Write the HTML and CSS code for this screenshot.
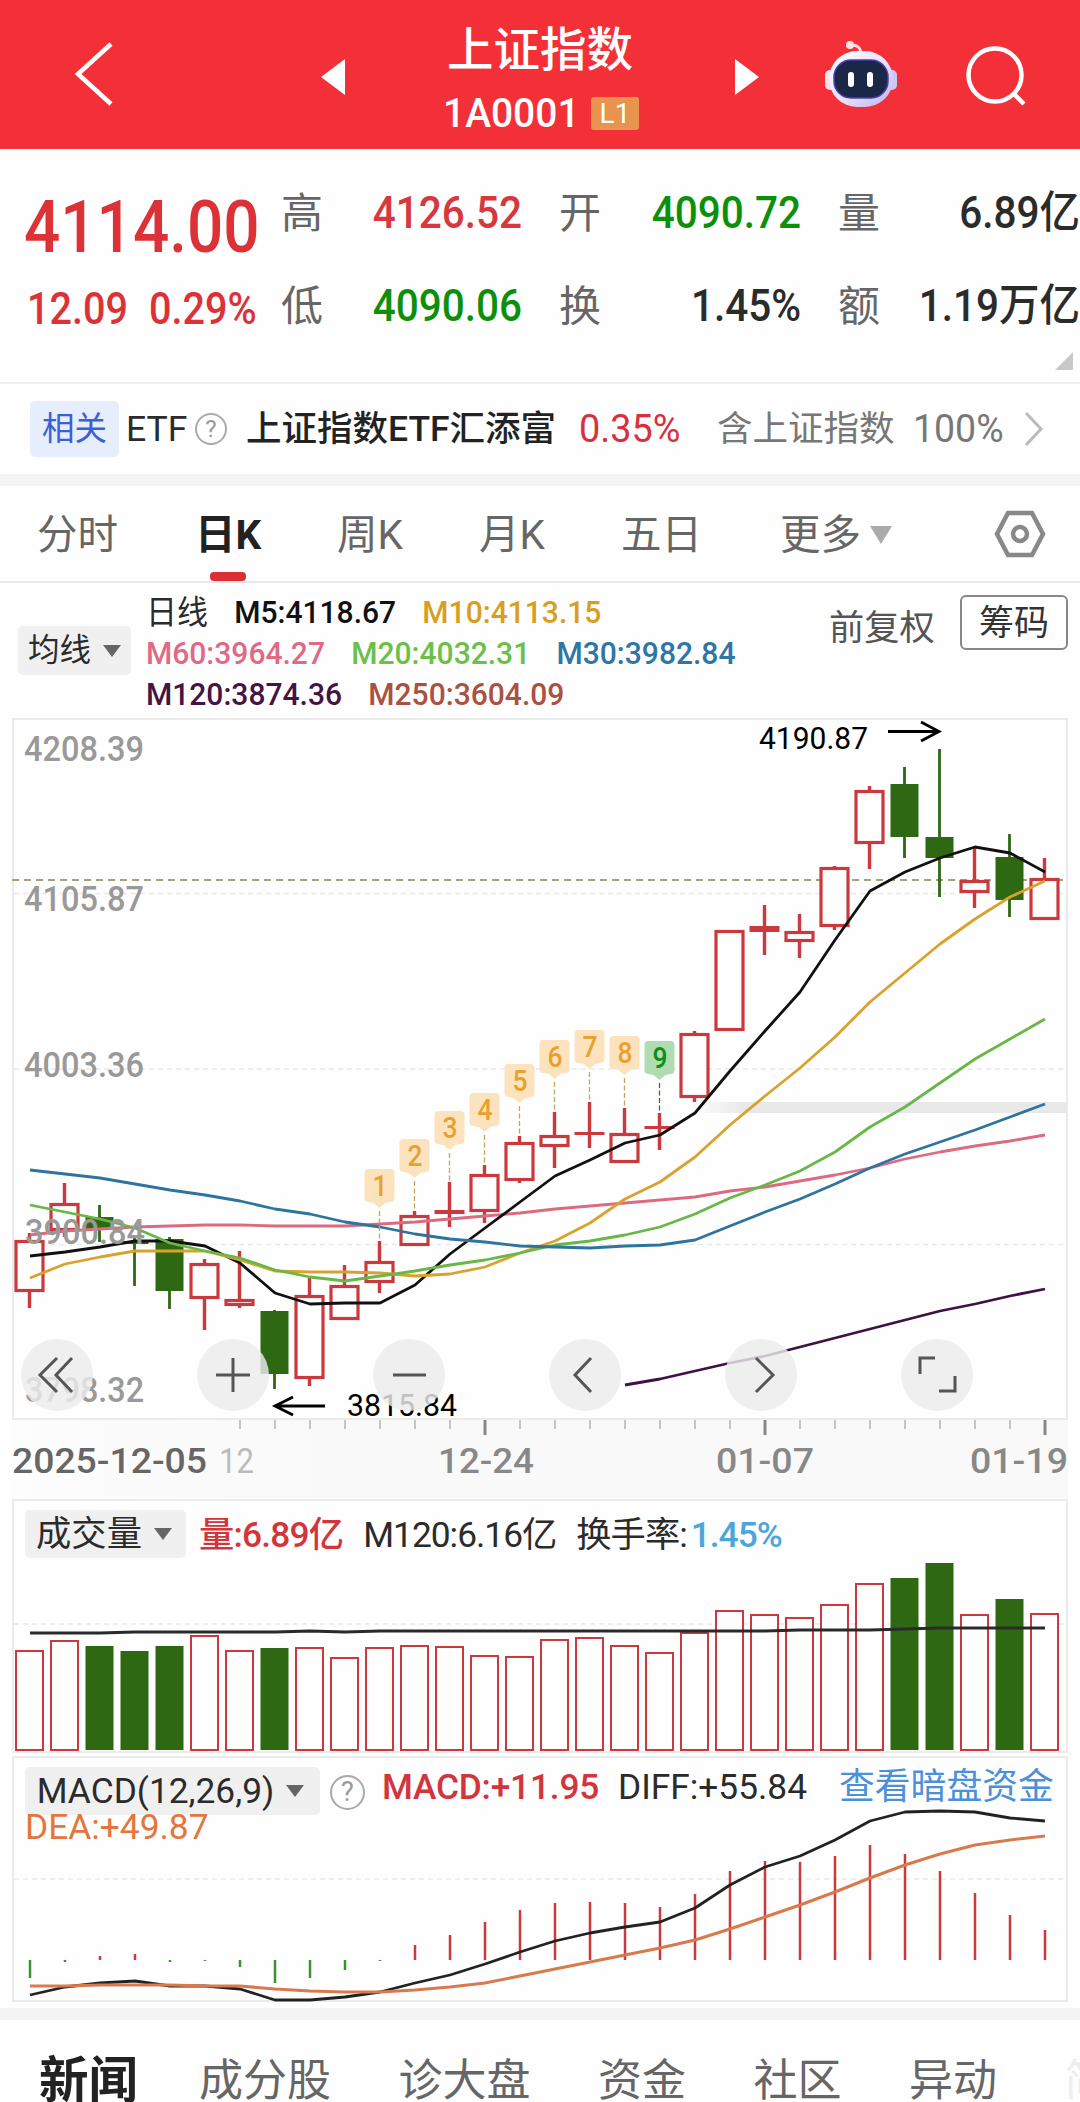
FILE: index.html
```
<!DOCTYPE html>
<html lang="zh">

<head>
    <meta charset="UTF-8">
    <meta name="viewport" content="width=device-width, initial-scale=1.0">
    <title>上证指数</title>
    <link rel="stylesheet" href="styles.css">
</head>

<body>
    <header class="topbar">
        <svg class="back" width="46" height="70" viewBox="0 0 46 70">
            <path d="M39 5L6 35L39 65" />
        </svg>
        <svg class="prev" width="24" height="36" viewBox="0 0 24 36">
            <path d="M24 0V36L0 18Z" />
        </svg>
        <div class="name">
            <h1>上证指数</h1>
            <p><span class="code">1A0001</span><span class="level">L1</span></p>
        </div>
        <svg class="next" width="24" height="36" viewBox="0 0 24 36">
            <path d="M0 0V36L24 18Z" />
        </svg>
        <svg class="robot" width="74" height="70" viewBox="0 0 74 70">
            <defs>
                <linearGradient id="shell" x1="0" y1="0" x2="1" y2="1">
                    <stop offset="0" stop-color="#fff" />
                    <stop offset="0.55" stop-color="#e9e0fa" />
                    <stop offset="1" stop-color="#b9b4f2" />
                </linearGradient>
            </defs>
            <path d="M26 7Q37 6 37 17" fill="none" stroke="#ffd9de" stroke-width="3" />
            <circle cx="26" cy="7" r="4" fill="#ffe3e6" />
            <rect x="1" y="32" width="10" height="20" rx="5" fill="#f5dff0" />
            <rect x="63" y="32" width="10" height="20" rx="5" fill="#cfc6f5" />
            <rect x="5" y="13" width="64" height="56" rx="28" fill="url(#shell)" />
            <rect x="10" y="22" width="54" height="38" rx="17" fill="#1c2748" stroke="#4a3fae" stroke-width="1.5" />
            <rect x="24" y="34" width="6" height="15" rx="3" fill="#fff" />
            <rect x="43" y="34" width="6" height="15" rx="3" fill="#fff" />
        </svg>
        <svg class="search" width="62" height="62" viewBox="0 0 62 62">
            <circle cx="30" cy="29" r="26.5" />
            <path d="M49 48L59 58" />
        </svg>
    </header>

    <section class="quote">
        <div class="price">
            <strong>4114.00</strong>
            <p><span>12.09</span><span>0.29%</span></p>
        </div>
        <dl>
            <dt>高</dt>
            <dd class="up">4126.52</dd>
            <dt>开</dt>
            <dd class="down">4090.72</dd>
            <dt>量</dt>
            <dd>6.89亿</dd>
            <dt>低</dt>
            <dd class="down">4090.06</dd>
            <dt>换</dt>
            <dd>1.45%</dd>
            <dt>额</dt>
            <dd>1.19万亿</dd>
        </dl>
        <i class="corner"></i>
    </section>

    <section class="etf">
        <span class="tag">相关</span>
        <span class="kind">ETF</span>
        <span class="help">?</span>
        <span class="fund">上证指数ETF汇添富</span>
        <span class="rate">0.35%</span>
        <span class="share">含上证指数</span>
        <span class="full">100%</span>
        <svg width="20" height="36" viewBox="0 0 20 36">
            <path d="M2 2L17 18L2 34" />
        </svg>
    </section>

    <nav class="periods">
        <a>分时</a>
        <a class="on">日K</a>
        <a>周K</a>
        <a>月K</a>
        <a>五日</a>
        <a class="more">更多<i class="caret"></i></a>
        <svg width="52" height="50" viewBox="0 0 52 50">
            <path d="M14 4H38L49 25L38 46H14L3 25Z" />
            <circle cx="26" cy="25" r="7" />
        </svg>
    </nav>

    <section class="averages">
        <button class="pick">均线<i class="caret"></i></button>
        <div class="lines">
            <p><span class="cn">日线</span><span class="m5">M5:4118.67</span><span class="m10">M10:4113.15</span></p>
            <p><span class="m60">M60:3964.27</span><span class="m20">M20:4032.31</span><span class="m30">M30:3982.84</span></p>
            <p><span class="m120">M120:3874.36</span><span class="m250">M250:3604.09</span></p>
        </div>
        <span class="adjust">前复权</span>
        <button class="chips">筹码</button>
    </section>

    <svg id="kline" class="kline" width="1080" height="781" viewBox="0 718 1080 781"></svg>

    <section class="panel">
        <svg id="volume" width="1080" height="257" viewBox="0 1499 1080 257"></svg>
        <div class="legend">
            <button class="pick">成交量<i class="caret"></i></button>
            <span class="red">量:6.89亿</span>
            <span class="m120v">M120:6.16亿</span>
            <span class="turn">换手率:<em>1.45%</em></span>
        </div>
    </section>

    <section class="panel">
        <svg id="macd" width="1080" height="252" viewBox="0 1756 1080 252"></svg>
        <div class="legend macd">
            <button class="pick">MACD(12,26,9)<i class="caret"></i></button>
            <span class="help">?</span>
            <span class="red">MACD:+11.95</span>
            <span class="diff">DIFF:+55.84</span>
            <a>查看暗盘资金</a>
            <span class="dea">DEA:+49.87</span>
        </div>
    </section>

    <nav class="news">
        <a class="on">新闻</a>
        <a>成分股</a>
        <a>诊大盘</a>
        <a>资金</a>
        <a>社区</a>
        <a>异动</a>
        <a class="fade">简况</a>
    </nav>

    <script src="script.js"></script>
</body>

</html>
```
FILE: styles.css
```
* {
    box-sizing: border-box;
}

body {
    width: 1080px;
    height: 2102px;
    margin: 0;
    overflow: hidden;
    background: #fefefe;
    color: #2b2b2b;
    font-family: Roboto, "Noto Sans CJK SC", sans-serif;
}

h1,
p,
dl,
dd {
    margin: 0;
}

button {
    border: 0;
    padding: 0;
    font: inherit;
    color: inherit;
}

.caret {
    display: inline-block;
    border: 9px solid transparent;
    border-top: 12px solid #666;
    border-bottom: 0;
}

/* 顶部标题栏 */
.topbar {
    display: flex;
    height: 149px;
    background: #f33038;
    color: #fff;
}

.back {
    margin: 39px 0 0 72px;
    fill: none;
    stroke: #fff;
    stroke-width: 4.5;
}

.prev,
.next {
    margin-top: 59px;
    fill: #fff;
}

.prev {
    margin-left: 203px;
}

.name {
    width: 390px;
    text-align: center;
}

.name h1 {
    margin-top: 20px;
    font-size: 46.5px;
    font-weight: 500;
    line-height: 60px;
}

.name p {
    display: flex;
    align-items: center;
    margin-top: 13px;
    padding-left: 98px;
    font-size: 41px;
    line-height: 41px;
}

/* 数字字形收窄 */
.code,
.price strong,
.price span,
.rate,
.full,
.lines {
    transform-origin: left;
}

.code {
    width: 137px;
    font-weight: 500;
    transform: scaleX(0.95);
}

.level {
    width: 48px;
    height: 33px;
    margin-left: 11px;
    border-radius: 3px;
    background: #e8934e;
    font-size: 28px;
    line-height: 34px;
}

.robot {
    margin: 38px 0 0 65px;
}

.search {
    margin: 46px 0 0 67px;
    fill: none;
    stroke: #fff;
    stroke-width: 4.5;
}

/* 行情 */
.quote {
    position: relative;
    display: flex;
    height: 235px;
    border-bottom: 2px solid #efefef;
}

.price {
    width: 281px;
    padding: 37px 0 0 24px;
    color: #dc3237;
}

.price strong {
    display: block;
    width: 257px;
    height: 82px;
    font-size: 73px;
    font-weight: 500;
    line-height: 82px;
    transform: scaleX(0.875);
}

.price p {
    display: flex;
    margin-top: 16px;
    padding-left: 3px;
    font-size: 43.5px;
    font-weight: 500;
    line-height: 52px;
}

.price span {
    width: 122px;
    transform: scaleX(0.91);
}

.quote dl {
    display: grid;
    grid-template-columns: 41px 200px 79px 200px 79px 200px;
    grid-template-rows: 93px 93px;
    width: 799px;
    height: 186px;
    padding-top: 18px;
    line-height: 93px;
    font-size: 44.5px;
}

.quote dt {
    color: #666;
    font-size: 42px;
    text-align: right;
}

.quote dd {
    font-weight: 500;
    text-align: right;
    white-space: nowrap;
    transform: scaleX(0.91);
    transform-origin: right;
}

.up {
    color: #d6383e;
}

.down {
    color: #0c900c;
}

.corner {
    position: absolute;
    right: 7px;
    bottom: 12px;
    border-left: 18px solid transparent;
    border-bottom: 18px solid #c9c9c9;
}

/* ETF */
.etf {
    display: flex;
    align-items: center;
    height: 102px;
    padding-left: 30px;
    border-bottom: 12px solid #f4f4f4;
    font-size: 35.5px;
    line-height: 52px;
    white-space: nowrap;
}

.etf > * {
    flex-shrink: 0;
}

.tag {
    width: 89px;
    height: 56px;
    border-radius: 5px;
    background: #e6edfc;
    color: #3a60d4;
    font-size: 32.5px;
    line-height: 57px;
    text-align: center;
}

.kind {
    width: 67px;
    padding-left: 7px;
}

.help {
    width: 32px;
    height: 32px;
    border: 2px solid #aaa;
    border-radius: 50%;
    color: #999;
    font-size: 24px;
    line-height: 28px;
    text-align: center;
}

.etf .help {
    margin-left: 9px;
}

.fund {
    width: 352px;
    padding-left: 19px;
    color: #222;
    font-weight: 500;
}

.rate {
    width: 138px;
    color: #d9303f;
    font-size: 39px;
    transform: scaleX(0.97);
}

.share {
    width: 196px;
    color: #777;
}

.full {
    width: 111px;
    color: #777;
    font-size: 39px;
    transform: scaleX(0.96);
}

.etf svg {
    fill: none;
    stroke: #bbb;
    stroke-width: 3;
}

/* 周期 */
.periods {
    display: flex;
    height: 97px;
    padding-left: 37px;
    border-bottom: 2px solid #e8e8e8;
    color: #666;
    font-size: 40.5px;
    line-height: 99px;
    white-space: nowrap;
}

.periods > * {
    flex-shrink: 0;
}

.periods a {
    width: 142px;
}

.periods a:first-child {
    width: 158px;
}

.periods .on {
    position: relative;
    color: #222;
    font-weight: 700;
}

.periods .on::after {
    content: "";
    position: absolute;
    left: 15px;
    bottom: 0;
    width: 36px;
    height: 9px;
    border-radius: 4px;
    background: #dc2f33;
}

.periods .more {
    width: 214px;
    padding-left: 17px;
}

.more .caret {
    margin: 0 0 5px 9px;
    border-width: 18px 11px 0;
    border-top-color: #aaa;
}

.periods svg {
    margin: 23px 0 0 17px;
    fill: none;
    stroke: #888;
    stroke-width: 4.5;
}

/* 均线 */
.averages {
    display: flex;
    height: 135px;
    padding-left: 18px;
    line-height: 41px;
}

.pick {
    display: flex;
    align-items: center;
    justify-content: center;
    gap: 12px;
    border-radius: 5px;
    background: #f0f0f0;
    color: #2b2b2b;
}

.averages .pick {
    width: 113px;
    height: 49px;
    margin: 43px 15px 0 0;
    font-size: 31.5px;
}

.lines {
    width: 683px;
    padding-top: 9px;
    font-size: 32px;
    font-weight: 500;
    transform: scaleX(0.938);
}

.lines p {
    display: flex;
    gap: 28px;
}

.cn {
    width: 66px;
    font-size: 33px;
    font-weight: 400;
}

.m5 {
    color: #111;
}

.m10 {
    color: #d99e20;
}

.m60 {
    color: #e06a86;
}

.m20 {
    color: #6cc04a;
}

.m30 {
    color: #2d76a6;
}

.m120 {
    color: #451445;
}

.m250 {
    color: #ab5142;
}

.adjust {
    width: 131px;
    padding-top: 25px;
    color: #555;
    font-size: 35.3px;
}

.chips {
    width: 108px;
    height: 55px;
    margin-top: 12px;
    border: 2px solid #888;
    border-radius: 6px;
    background: none;
    color: #333;
    font-size: 35px;
    line-height: 53px;
}

/* 图表 */
.kline,
.panel svg {
    display: block;
}

svg text {
    font-family: Roboto, "Noto Sans CJK SC", sans-serif;
}

.panel {
    display: grid;
}

.panel > * {
    grid-area: 1 / 1;
}

.legend {
    display: flex;
    align-items: flex-start;
    padding: 11px 0 0 25px;
    font-size: 35.3px;
    line-height: 50px;
    white-space: nowrap;
}

.legend .pick {
    width: 161px;
    height: 48px;
    margin-right: 13px;
    padding-right: 3px;
}

.legend > span {
    margin-right: 20px;
}

.red {
    color: #d2353b;
    font-weight: 500;
    letter-spacing: -0.8px;
}

.m120v,
.turn {
    letter-spacing: -1px;
}

.turn em {
    margin-left: 4px;
    color: #4ca6da;
    font-style: normal;
    font-weight: 500;
}

.macd {
    flex-wrap: wrap;
    align-content: flex-start;
}

.macd .pick {
    width: 295px;
    margin-right: 10px;
    padding-right: 4px;
}

.macd .help {
    width: 35px;
    height: 35px;
    margin: 8px 17px 0 0;
    font-size: 27px;
    line-height: 31px;
}

.macd .red,
.macd .diff,
.macd a {
    margin-top: -5px;
}

.macd .red {
    width: 216px;
    letter-spacing: -0.2px;
}

.macd .diff {
    width: 201px;
}

.macd a {
    color: #4b90d8;
    font-size: 35.8px;
}

.macd .dea {
    width: 100%;
    margin-top: -13px;
    color: #e3763c;
}

.news {
    display: flex;
    align-items: center;
    height: 94px;
    border-top: 12px solid #f4f4f4;
    padding: 40px 0 0 39px;
    overflow: hidden;
    color: #666;
    font-size: 44px;
    line-height: 60px;
    white-space: nowrap;
}

.news a {
    flex-shrink: 0;
    margin-right: 67.5px;
}

.news .on {
    margin-right: 61px;
    color: #222;
    font-size: 49.5px;
    font-weight: 700;
}

.news .fade {
    margin-right: 0;
    color: #eee;
}
```
FILE: script.js
```
const RED = "#c9393d";
const GREEN = "#2f6813";

// 第 i 根K线的横坐标
const cx = i => 29.5 + i * 35;

// [涨, 实体上, 实体下, 最高, 最低]
const candles = [
    [1, 1240, 1292, 1233, 1308], [1, 1203, 1231, 1183, 1237], [0, 1217, 1229, 1205, 1242],
    [0, 1241, 1244, 1238, 1286], [0, 1239, 1291, 1237, 1309], [1, 1263, 1299, 1259, 1330],
    [1, 1299, 1306, 1251, 1308], [0, 1311, 1374, 1310, 1389], [1, 1295, 1379, 1278, 1386],
    [1, 1285, 1320, 1265, 1320], [1, 1261, 1283, 1241, 1293], [1, 1215, 1246, 1211, 1246],
    [1, 1210, 1214, 1182, 1227], [1, 1174, 1212, 1165, 1223], [1, 1142, 1181, 1136, 1183],
    [1, 1135, 1147, 1112, 1168], [1, 1132, 1135, 1102, 1148], [1, 1133, 1163, 1108, 1163],
    [1, 1126, 1129, 1113, 1150], [1, 1033, 1098, 1031, 1102], [1, 930, 1031, 930, 1031],
    [1, 926, 932, 905, 955], [1, 931, 942, 914, 958], [1, 867, 927, 866, 930],
    [1, 790, 844, 786, 869], [0, 784, 837, 767, 858], [0, 837, 858, 749, 897],
    [1, 880, 893, 848, 908], [0, 857, 900, 834, 917], [1, 878, 920, 858, 920]
];

const averages = [
    ["#dc6a80", 0, [1235, 1231, 1229, 1227, 1226, 1225, 1225, 1226, 1226, 1226, 1224, 1222, 1219, 1216, 1213, 1209, 1206, 1203, 1200, 1197, 1191, 1187, 1181, 1175, 1168, 1159, 1152, 1146, 1141, 1135]],
    ["#3b1440", 17, [1385, 1379, 1371, 1363, 1356, 1347, 1338, 1329, 1320, 1311, 1304, 1296, 1289]],
    ["#111", 0, [1256, 1252, 1247, 1241, 1241, 1246, 1263, 1293, 1304, 1303, 1303, 1285, 1254, 1228, 1202, 1176, 1160, 1143, 1135, 1113, 1071, 1031, 992, 940, 891, 872, 858, 847, 853, 872]],
    ["#d9a22c", 0, [1278, 1264, 1257, 1251, 1251, 1251, 1260, 1271, 1272, 1272, 1273, 1276, 1274, 1267, 1253, 1241, 1223, 1199, 1182, 1157, 1125, 1096, 1068, 1037, 1002, 973, 944, 919, 897, 881]],
    ["#68b748", 0, [1205, 1212, 1219, 1228, 1243, 1251, 1258, 1270, 1277, 1281, 1276, 1271, 1265, 1260, 1253, 1245, 1241, 1235, 1227, 1214, 1198, 1185, 1171, 1152, 1127, 1107, 1083, 1059, 1039, 1019]],
    ["#2f739f", 0, [1170, 1174, 1178, 1184, 1190, 1195, 1201, 1209, 1214, 1222, 1227, 1234, 1239, 1242, 1246, 1247, 1248, 1246, 1245, 1240, 1226, 1212, 1199, 1184, 1168, 1154, 1142, 1130, 1117, 1104]]
];

// 九转序列标记的顶部位置
const marks = [1169, 1139, 1111, 1093, 1064, 1040, 1030, 1036, 1041];

const volumes = [1650, 1640, 1646, 1651, 1646, 1635, 1650, 1648, 1647, 1657, 1647, 1645, 1646, 1655, 1656, 1639, 1637, 1645, 1652, 1632, 1610, 1614, 1617, 1604, 1583, 1578, 1563, 1614, 1599, 1613];
const volumeLine = [1633, 1633, 1633, 1632, 1632, 1632, 1632, 1632, 1631, 1632, 1631, 1631, 1631, 1631, 1631, 1631, 1631, 1631, 1631, 1631, 1631, 1631, 1630, 1630, 1630, 1629, 1628, 1628, 1628, 1628];

const bars = [1978, 1962, 1956, 1954, 1962, 1961, 1967, 1983, 1978, 1970, 1961, 1945, 1935, 1922, 1910, 1903, 1902, 1903, 1907, 1894, 1871, 1861, 1862, 1856, 1845, 1854, 1871, 1893, 1915, 1930];
const diff = [1995, 1987, 1983, 1981, 1986, 1986, 1989, 2000, 2000, 1997, 1992, 1983, 1975, 1964, 1952, 1941, 1933, 1927, 1922, 1908, 1885, 1867, 1856, 1840, 1821, 1812, 1811, 1812, 1818, 1821];
const dea = [1986, 1986, 1985, 1985, 1985, 1986, 1986, 1989, 1991, 1992, 1992, 1990, 1987, 1983, 1976, 1969, 1962, 1955, 1948, 1940, 1929, 1917, 1905, 1892, 1878, 1865, 1854, 1845, 1840, 1836];

function path(d, color, width = 2.5, extra = "") {
    return `<path d="${d}" fill="none" stroke="${color}" stroke-width="${width}" ${extra}/>`;
}

function polyline(values, start, color, width) {
    return path("M" + values.map((y, i) => `${cx(i + start) + 0.5} ${y}`).join("L"), color, width, 'stroke-linejoin="round"');
}

function label(text, x, y, width, size, color, weight = 400) {
    return `<text x="${x}" y="${y}" textLength="${width}" lengthAdjust="spacingAndGlyphs" font-size="${size}" fill="${color}" font-weight="${weight}">${text}</text>`;
}

function frame(top, bottom) {
    return `<rect x="13" y="${top}" width="1054" height="${bottom - top}" fill="none" stroke="#ebebeb" stroke-width="2"/>`;
}

function grid(y) {
    return path(`M14 ${y}H1066`, "#e9e9e9", 1.5, 'stroke-dasharray="5 4"');
}

// K线图
function drawKline() {
    let s = `<defs><linearGradient id="gap"><stop offset="0" stop-color="#e8e8e8" stop-opacity="0"/><stop offset="0.15" stop-color="#e8e8e8"/></linearGradient>
        <linearGradient id="foot"><stop offset="0" stop-color="#fdfdfd"/><stop offset="0.3" stop-color="#f9f9f9"/></linearGradient></defs>`;
    s += '<rect x="12" y="1420" width="1056" height="78" fill="url(#foot)"/>';
    s += frame(719, 1419) + grid(893.5) + grid(1069) + grid(1244.5);
    s += '<rect x="690" y="1102" width="377" height="11" fill="url(#gap)"/>';
    s += path("M12 880H1067", "#a3a27c", 1.8, 'stroke-dasharray="7 5"');

    candles.forEach(([up, top, bottom, high, low], i) => {
        const x = cx(i);
        const color = up ? RED : GREEN;
        s += path(`M${x} ${high}V${top}M${x} ${bottom}V${low}`, color, up ? 3.4 : 2.8);
        if (!up) {
            s += `<rect x="${x - 14}" y="${top}" width="28" height="${bottom - top}" fill="${GREEN}"/>`;
        } else if (bottom - top < 7) {
            s += `<rect x="${x - 15}" y="${top}" width="30" height="${bottom - top}" fill="${RED}"/>`;
        } else {
            s += `<rect x="${x - 13.5}" y="${top + 1.5}" width="27" height="${bottom - top - 3}" fill="#fefefe" stroke="${RED}" stroke-width="3.2"/>`;
        }
    });
    averages.forEach(([color, start, values]) => s += polyline(values, start, color, 2.8));

    marks.forEach((y, i) => {
        const x = cx(i + 10);
        const last = i === 8;
        s += path(`M${x} ${y + 42}V${candles[i + 10][3]}`, last ? "#357a35" : "#c2a560", 1.3, 'stroke-dasharray="5 2.5"');
        s += `<path d="M${x - 11} ${y}H${x + 11}Q${x + 15} ${y} ${x + 15} ${y + 4}V${y + 29}Q${x + 15} ${y + 33} ${x + 11} ${y + 33}L${x + 6} ${y + 34}L${x} ${y + 39}L${x - 6} ${y + 34}L${x - 11} ${y + 33}Q${x - 15} ${y + 33} ${x - 15} ${y + 29}V${y + 4}Q${x - 15} ${y} ${x - 11} ${y}Z" fill="${last ? "#b0dcb1" : "#fce3bd"}"/>`;
        s += label(i + 1, x - 7, y + 27, 15, 29, last ? "#0b8f16" : "#e8a02e", 500);
    });

    s += label("4208.39", 24, 761, 120, 35.5, "#999", 500);
    s += label("4105.87", 24, 911, 120, 35.5, "#999", 500);
    s += label("4003.36", 24, 1077, 120, 35.5, "#999", 500);
    s += label("3900.84", 25, 1243.5, 120, 35.5, "#999", 500);
    s += label("3798.32", 25, 1402, 119, 35.5, "#999", 500);
    s += label("4190.87", 759, 749, 109, 31.5, "#000");
    s += label("3815.84", 347, 1416, 110, 31.5, "#000");
    s += path("M888 731.5H939M921 722L939 731.5L921 741", "#000", 2.8);
    s += path("M325 1406H275M293 1397L275 1406L293 1415", "#000", 2.8);

    // 悬浮按钮
    const icons = [
        "M57 1358L40 1375L57 1392M72 1358L56 1375L72 1392",
        "M216 1375H250M233 1358V1392",
        "M393 1375H426",
        "M591 1358L575 1375L591 1392",
        "M756 1358L773 1375L756 1392",
        "M920 1374V1358H935M955 1376V1391H939"
    ];
    icons.forEach((d, i) => {
        s += `<circle cx="${57 + i * 176}" cy="1375" r="36" fill="#ebebeb" fill-opacity="0.82"/>` + path(d, "#555", 3);
    });

    // 日期轴
    for (let i = 6; i < 30; i++) {
        const major = [13, 21, 29].includes(i);
        s += path(`M${cx(i) + 0.5} 1420V${major ? 1435 : 1429}`, major ? "#888" : "#c4c4c4", major ? 3 : 2);
    }
    s += label("2025-12-05", 12, 1473, 195, 35.5, "#666", 500);
    s += label("12", 219, 1473, 35, 35.5, "#bbb");
    s += label("12-24", 438, 1473, 96, 35.5, "#888", 500);
    s += label("01-07", 716, 1473, 98, 35.5, "#888", 500);
    s += label("01-19", 970, 1473, 98, 35.5, "#888", 500);
    document.getElementById("kline").innerHTML = s;
}

// 成交量
function drawVolume() {
    let s = frame(1500, 1752) + grid(1624);
    volumes.forEach((y, i) => {
        const x = cx(i);
        if (candles[i][0]) {
            s += `<rect x="${x - 13.5}" y="${y + 1}" width="27" height="${1749 - y}" fill="#fefefe" stroke="${RED}" stroke-width="2"/>`;
        } else {
            s += `<rect x="${x - 14}" y="${y}" width="28" height="${1750 - y}" fill="${GREEN}"/>`;
        }
    });
    document.getElementById("volume").innerHTML = s + polyline(volumeLine, 0, "#2a2a2a", 2.8);
}

// MACD
function drawMacd() {
    let s = frame(1757, 2001) + grid(1879);
    bars.forEach((y, i) => s += path(`M${cx(i) + 0.5} 1960V${y}`, y < 1960 ? RED : "#3c9130", 2.5));
    s += polyline(diff, 0, "#222", 2.8) + polyline(dea, 0, "#d87a4e", 3);
    document.getElementById("macd").innerHTML = s;
}

drawKline();
drawVolume();
drawMacd();
```
